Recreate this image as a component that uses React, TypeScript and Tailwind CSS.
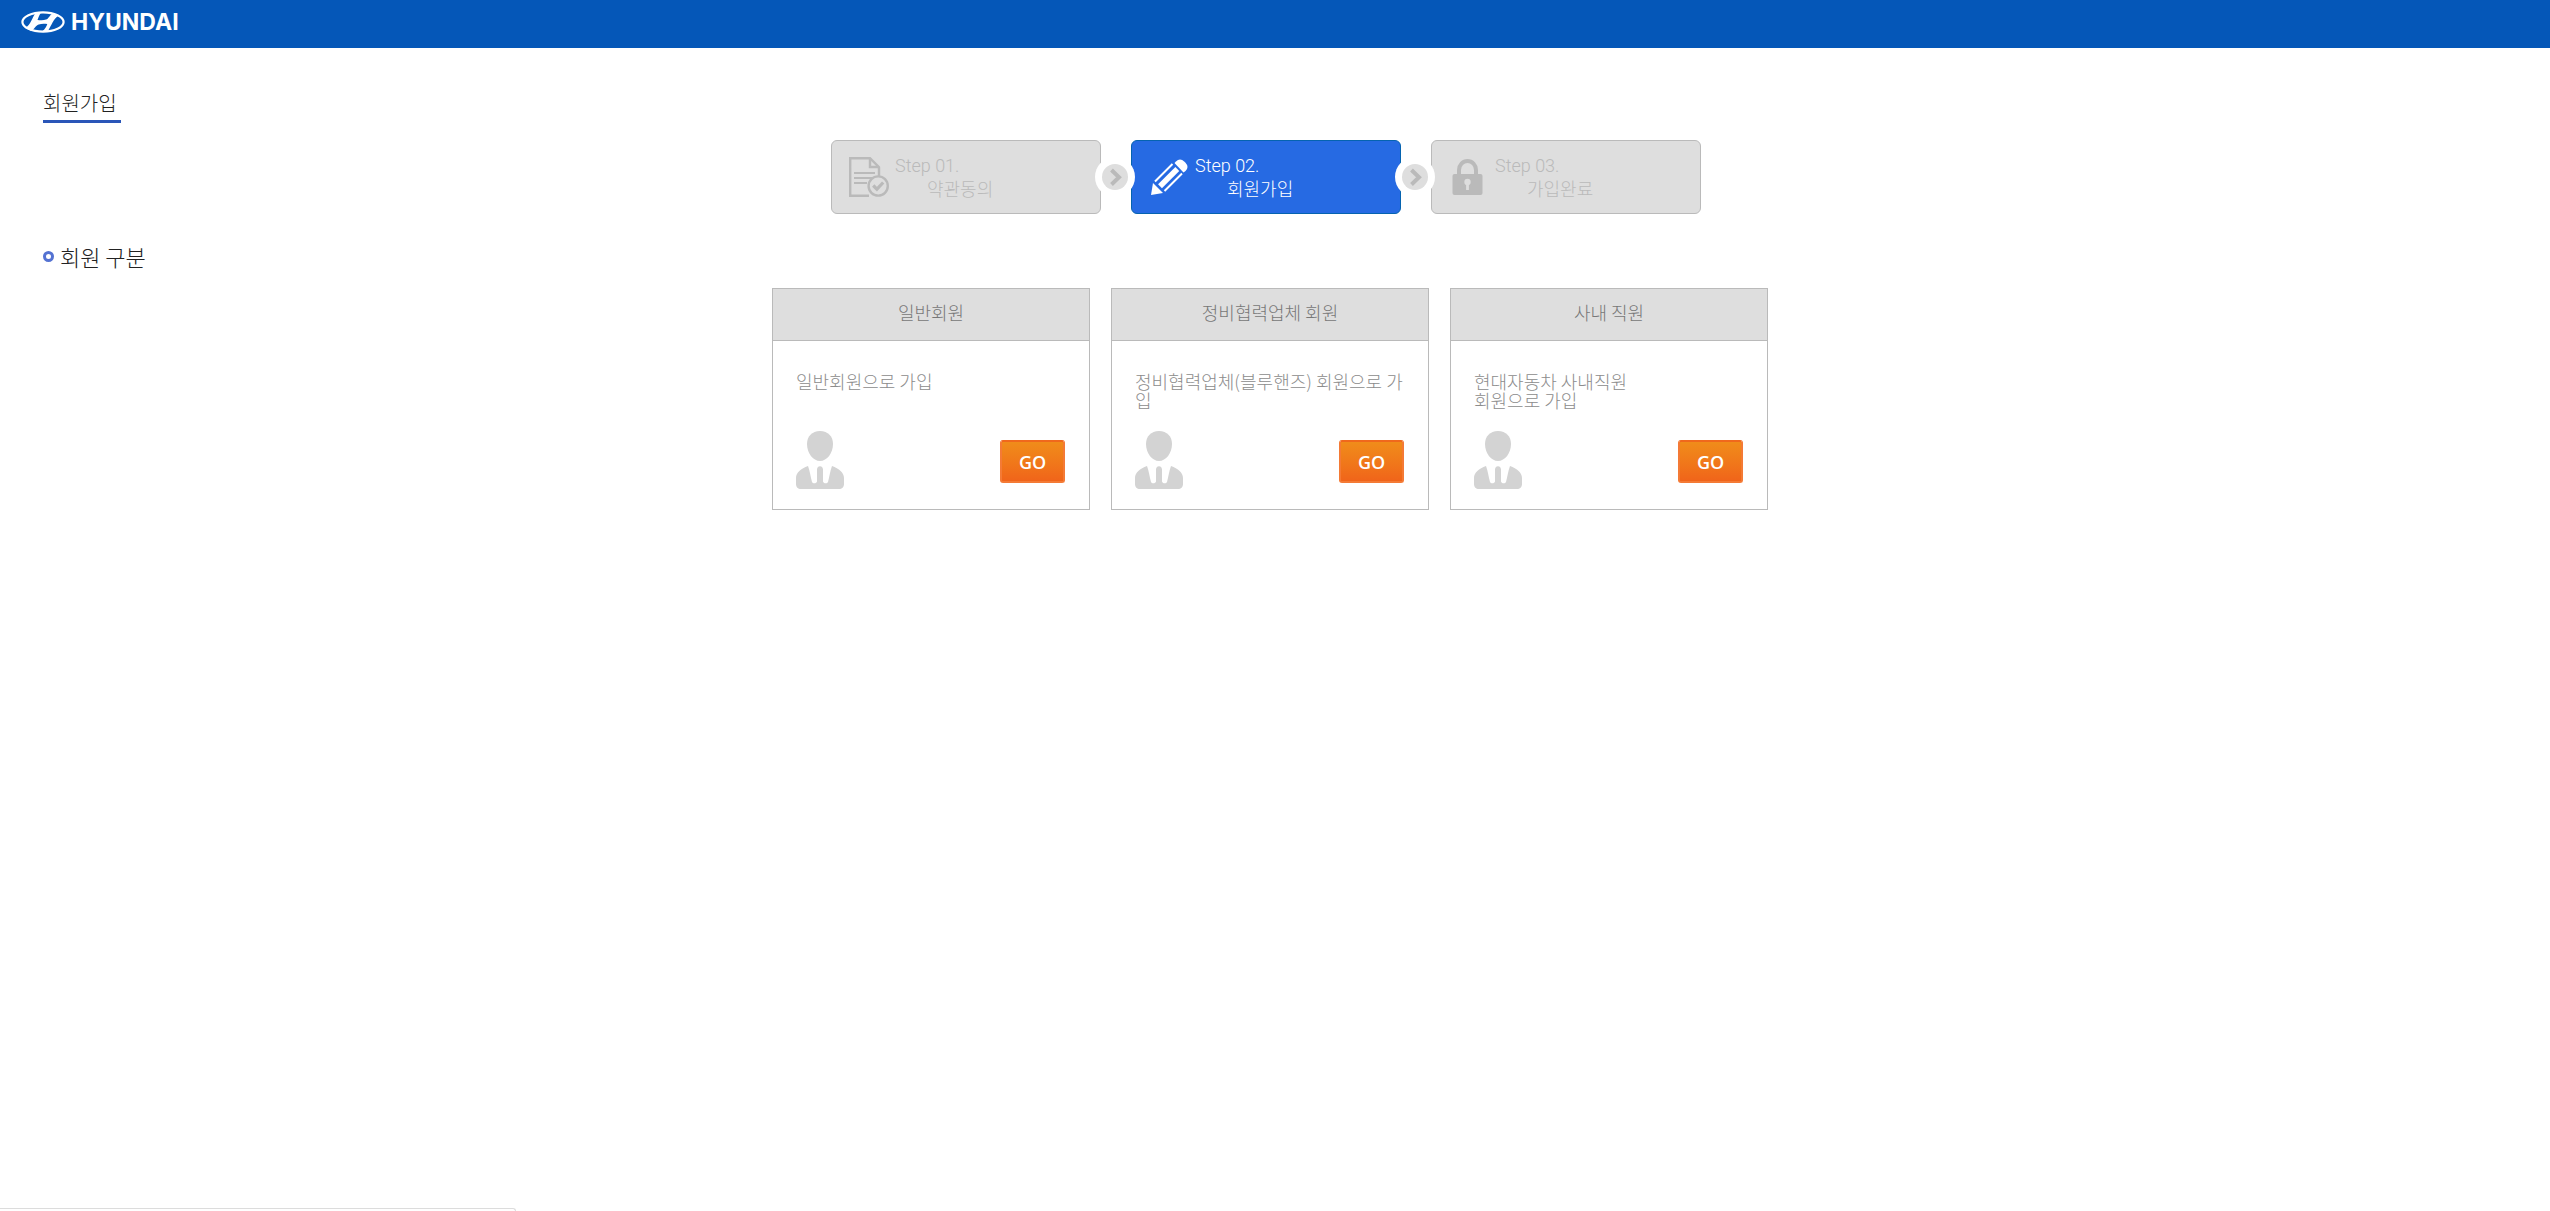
import React from "react";

// ─── Icons ────────────────────────────────────────────────────────────────────

const IconEmblem = () => (
  <svg className="w-11 h-[22px]" viewBox="0 0 44 22" fill="none">
    <ellipse cx="22" cy="11" rx="20.6" ry="9.7" stroke="#fff" strokeWidth="2.200" />
    <path
      fill="#fff"
      d="M20 1.500C18.500 3.500 17.500 6.500 16.500 9c3.500.5 6.500.4 8.500-.4C28 7.500 28.500 4 32 2.200l5.500 2.300c-5 3.500-7 9.500-10.500 15.500h-5.500c2.700-1.700 3.800-4.300 4.800-7-3.300-.5-6-.4-8.600.4C14.500 14.300 13.500 18.500 10 20l-5.500-3.500C9.500 14.200 11 7 14.500 2Z"
    />
  </svg>
);

const IconDocument = () => (
  <svg className="w-10 h-10" viewBox="0 0 40 40" fill="none" stroke="#bababa">
    <path strokeWidth="2.400" d="M20 38.800H1.200V1.200H21l9 9V19" />
    <path strokeWidth="2.400" d="M21 1v9h9" />
    <path strokeWidth="2.200" d="M5 16h21M5 21h18M5 26h13" />
    <circle cx="29.200" cy="29" r="9.600" strokeWidth="2.400" fill="#dedede" />
    <path strokeWidth="3.200" d="M24.200 28.500l3.700 3.700 6.300-6.700" />
  </svg>
);

const IconPencil = () => (
  <svg className="w-10 h-10" viewBox="0 0 40 40" fill="#fff">
    <path d="M2 38l2-12 10 10Z" />
    <path d="M27 4.500q4-4 8.500.3l1 1q4 4.200 0 8.200l-2 1.500L25.500 6Z" />
    <path stroke="#fff" strokeWidth="2" d="M6 24.500L23.500 7M15.500 34L33 16.500" />
    <path stroke="#fff" strokeWidth="5.500" d="M11 29.300L28.300 12" />
  </svg>
);

const IconLock = () => (
  <svg className="w-10 h-10" viewBox="0 0 40 40">
    <path fill="none" stroke="#bababa" strokeWidth="4" d="M10 19v-6a8.500 9 0 0 1 17 0v6" />
    <rect x="3.500" y="17" width="30" height="21" rx="2" fill="#bababa" />
    <circle cx="18.500" cy="25" r="3.200" fill="#dedede" />
    <path stroke="#dedede" strokeWidth="2.800" d="M18.500 25v8" />
  </svg>
);

const IconPerson = () => (
  <svg className="w-12 h-[58px]" viewBox="0 0 48 58" fill="#d3d3d3">
    <path d="M24 0c8 0 13 5.500 13 13 0 9-6 17-13 17s-13-8-13-17C11 5.500 16 0 24 0Z" />
    <path d="M12 35c2 5 2.500 11 4 16 .7 1.800 4.500 1.800 5-.5V38.500c0-4.500 6-4.500 6 0v12c.5 2.300 4.300 2.300 5 .5 1.500-5 2-11 4-16 7 2.500 12 6.500 12 12v6c0 3-2 5-5 5H5c-3 0-5-2-5-5v-6c0-5.500 5-9.500 12-12Z" />
  </svg>
);

// ─── Data ─────────────────────────────────────────────────────────────────────

interface Step {
  label: string;
  name: string;
  icon: React.ReactNode;
  active?: boolean;
}

interface MemberType {
  title: string;
  description: string;
}

const steps: Step[] = [
  { label: "Step 01.", name: "약관동의", icon: <IconDocument /> },
  { label: "Step 02.", name: "회원가입", icon: <IconPencil />, active: true },
  { label: "Step 03.", name: "가입완료", icon: <IconLock /> },
];

const memberTypes: MemberType[] = [
  { title: "일반회원", description: "일반회원으로 가입" },
  { title: "정비협력업체 회원", description: "정비협력업체(블루핸즈) 회원으로 가입" },
  { title: "사내 직원", description: "현대자동차 사내직원\n회원으로 가입" },
];

// ─── Components ───────────────────────────────────────────────────────────────

const StepArrow = () => (
  <span className="relative z-10 -mr-1 -ml-1.5 flex size-10 shrink-0 items-center justify-center rounded-full bg-white">
    <svg className="size-[26px]" viewBox="0 0 26 26" fill="none">
      <circle cx="13" cy="13" r="13" fill="#dedede" />
      <path stroke="#bababa" strokeWidth="4" d="M9.500 6l7.500 7.300-7.500 7.200" />
    </svg>
  </span>
);

function StepBox({ step }: { step: Step }) {
  return (
    <div
      aria-current={step.active ? "step" : undefined}
      className={`flex h-[74px] w-[270px] items-center rounded-md border pl-[17px] text-lg/[23px] ${
        step.active
          ? "border-[#0563b0] bg-[#266ae3] text-white"
          : "border-[#bababa] bg-[#dedede] text-[#bababa]"
      }`}
    >
      {step.icon}
      <div className="ml-1.5">
        <p className="font-['Roboto',sans-serif]">{step.label}</p>
        <p className="pl-8">{step.name}</p>
      </div>
    </div>
  );
}

function MemberCard({ member }: { member: MemberType }) {
  return (
    <section className="flex flex-col border border-[#bababa]">
      <h3 className="border-b border-[#bababa] bg-[#dedede] pt-2.5 pb-3.5 text-center text-lg/[27px] text-[#777]">
        {member.title}
      </h3>
      <div className="flex grow flex-col pt-[31px] pr-4 pb-5 pl-[23px]">
        <p className="min-h-[38px] text-lg/[19px] break-all whitespace-pre-line text-[#8c8c8c]">{member.description}</p>
        <div className="mt-[21px] mr-2 flex items-end justify-between">
          <IconPerson />
          <button
            type="button"
            aria-label={`${member.title} GO`}
            className="mb-1.5 h-[43px] w-[65px] cursor-pointer rounded-[3px] border-2 border-[#f47a35] border-t-[#f0681c] bg-linear-to-b from-[#f08c1a] to-[#f0641a] font-['Open_Sans',sans-serif] text-lg font-semibold text-white"
          >
            GO
          </button>
        </div>
      </div>
    </section>
  );
}

export default function App() {
  return (
    <div className="min-h-screen bg-white font-['Noto_Sans_CJK_KR',sans-serif] font-light text-[#222]">
      <header className="flex h-12 items-center bg-[#0557b8] pb-1 pl-[21px]">
        <a href="#" className="flex items-center gap-1.5">
          <IconEmblem />
          <span className="font-['Inter',sans-serif] text-[23px]/[24px] font-bold text-white">HYUNDAI</span>
        </a>
      </header>

      <main className="pt-10 pr-[53px] pl-[43px]">
        <h1 className="inline-block border-b-3 border-[#2a56b8] pr-1 pb-[3px] text-xl/[29px]">회원가입</h1>

        <ol className="mt-[17px] mr-2 flex justify-center">
          {steps.map((step, index) => (
            <li key={step.label} className="flex items-center">
              {index > 0 && <StepArrow />}
              <StepBox step={step} />
            </li>
          ))}
        </ol>

        <h2 className="mt-[26px] flex items-center gap-1.5 text-[22px]/[32px]">
          <span className="size-[11px] rounded-full border-3 border-[#5472d2]" />
          회원 구분
        </h2>

        <div className="mx-auto mt-4 grid max-w-[996px] grid-cols-3 gap-[21px]">
          {memberTypes.map((member) => (
            <MemberCard key={member.title} member={member} />
          ))}
        </div>
      </main>

      {/* Link status strip at the window's lower edge */}
      <div className="fixed bottom-0 left-0 h-[3px] w-[516px] rounded-tr-sm border-t border-r border-[#dcdcdc]" />
    </div>
  );
}
